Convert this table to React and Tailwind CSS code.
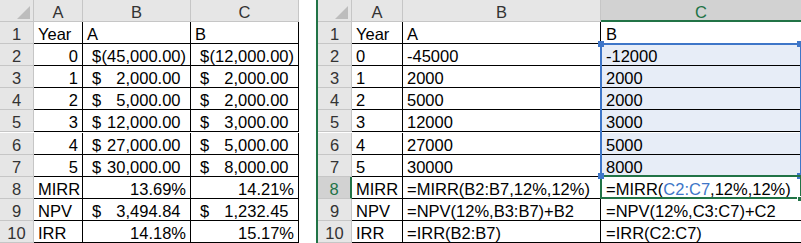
import React from "react";

const hdr =
  "h-[22px] border-r border-b border-[#c6c6c6] bg-[#e6e6e6] text-[#333] text-center leading-[17px] pt-[4px] overflow-hidden whitespace-nowrap";
const cell =
  "h-[22px] border-r border-b border-black leading-[17px] pt-[4px] px-[4px] overflow-hidden whitespace-nowrap";

function Corner() {
  return (
    <div className="h-[22px] border-r border-b border-[#c6c6c6] bg-[#e6e6e6] flex items-end justify-end pr-[3px] pb-[2px]">
      <svg width="13" height="13" viewBox="0 0 13 13">
        <polygon points="13,0 13,13 0,13" fill="#bdbdbd" />
      </svg>
    </div>
  );
}

function Acc({ v, neg }) {
  return (
    <div className={cell + " bg-white flex justify-between pl-[9px] pr-[4px]"}>
      <span>$</span>
      <span>
        {v}
        {neg ? "" : <span className="invisible">)</span>}
      </span>
    </div>
  );
}

const leftRows = [
  { a: "Year", b: "A", c: "B", kind: "text" },
  { a: "0", b: ["(45,000.00)", true], c: ["(12,000.00)", true], kind: "acc" },
  { a: "1", b: ["2,000.00"], c: ["2,000.00"], kind: "acc" },
  { a: "2", b: ["5,000.00"], c: ["2,000.00"], kind: "acc" },
  { a: "3", b: ["12,000.00"], c: ["3,000.00"], kind: "acc" },
  { a: "4", b: ["27,000.00"], c: ["5,000.00"], kind: "acc" },
  { a: "5", b: ["30,000.00"], c: ["8,000.00"], kind: "acc" },
  { a: "MIRR", b: "13.69%", c: "14.21%", kind: "pct" },
  { a: "NPV", b: ["3,494.84"], c: ["1,232.45"], kind: "acc" },
  { a: "IRR", b: "14.18%", c: "15.17%", kind: "pct" },
];

function LeftSheet() {
  return (
    <div className="grid grid-cols-[34px_49px_108px_108px] w-[299px] shrink-0">
      <Corner />
      <div className={hdr}>A</div>
      <div className={hdr}>B</div>
      <div className={hdr}>C</div>
      {leftRows.map((r, i) => {
        const isNumA = /^\d+$/.test(r.a);
        return (
          <React.Fragment key={i}>
            <div className={hdr}>{i + 1}</div>
            <div className={cell + " bg-white " + (isNumA ? "text-right" : "text-left")}>{r.a}</div>
            {r.kind === "text" && (
              <>
                <div className={cell + " bg-white"}>{r.b}</div>
                <div className={cell + " bg-white"}>{r.c}</div>
              </>
            )}
            {r.kind === "acc" && (
              <>
                <Acc v={r.b[0]} neg={r.b[1]} />
                <Acc v={r.c[0]} neg={r.c[1]} />
              </>
            )}
            {r.kind === "pct" && (
              <>
                <div className={cell + " bg-white text-right"}>{r.b}</div>
                <div className={cell + " bg-white text-right"}>{r.c}</div>
              </>
            )}
          </React.Fragment>
        );
      })}
    </div>
  );
}

const rightRows = [
  ["Year", "A", "B"],
  ["0", "-45000", "-12000"],
  ["1", "2000", "2000"],
  ["2", "5000", "2000"],
  ["3", "12000", "3000"],
  ["4", "27000", "5000"],
  ["5", "30000", "8000"],
  ["MIRR", "=MIRR(B2:B7,12%,12%)", null],
  ["NPV", "=NPV(12%,B3:B7)+B2", "=NPV(12%,C3:C7)+C2"],
  ["IRR", "=IRR(B2:B7)", "=IRR(C2:C7)"],
];

function RightSheet() {
  return (
    <div className="relative grid grid-cols-[34px_51px_198px_200px] w-[483px] shrink-0">
      <Corner />
      <div className={hdr}>A</div>
      <div className={hdr}>B</div>
      <div className="h-[22px] border-b-2 border-[#217346] bg-[#d2d2d2] text-[#217346] text-center leading-[17px] pt-[4px]">
        C
      </div>
      {rightRows.map((r, i) => {
        const n = i + 1;
        const sel = n >= 2 && n <= 7;
        return (
          <React.Fragment key={i}>
            {n === 8 ? (
              <div className="h-[22px] border-r-2 border-b border-r-[#217346] border-b-[#c6c6c6] bg-[#d2d2d2] text-[#217346] text-center leading-[17px] pt-[4px]">
                {n}
              </div>
            ) : (
              <div className={hdr}>{n}</div>
            )}
            <div className={cell + " bg-white"}>{r[0]}</div>
            <div className={cell + " bg-white"}>{r[1]}</div>
            <div className={cell + " border-r-0 pl-[5px] " + (sel ? "bg-[#e7edf7]" : "bg-white")}>
              {r[2] === null ? (
                <>
                  =MIRR(<span className="text-[#3e76c8]">C2:C7</span>,12%,12%)
                </>
              ) : (
                r[2]
              )}
            </div>
          </React.Fragment>
        );
      })}
      {/* range highlight C2:C7 */}
      <div className="absolute left-[282px] top-[43px] w-[202px] h-[134px] border-2 border-[#3e76c8] pointer-events-none" />
      <div className="absolute left-[280px] top-[41px] w-[6px] h-[6px] bg-[#3e76c8]" />
      <div className="absolute left-[479px] top-[41px] w-[6px] h-[6px] bg-[#3e76c8]" />
      <div className="absolute left-[479px] top-[173px] w-[6px] h-[6px] bg-[#3e76c8]" />
      {/* active cell C8 */}
      <div className="absolute left-[282px] top-[175px] w-[202px] h-[24px] border-2 border-[#217346] pointer-events-none" />
      <div className="absolute left-[280px] top-[173px] w-[6px] h-[6px] bg-[#3e76c8]" />
      <div className="absolute left-[479px] top-[196px] w-[6px] h-[6px] bg-[#217346] border border-white" />
    </div>
  );
}

export default function App() {
  return (
    <div className="w-[801px] h-[243px] overflow-hidden bg-white flex font-['Liberation_Sans',Arial,sans-serif] text-[16.5px] text-black">
      <LeftSheet />
      <div className="w-[17px] shrink-0" />
      <div className="w-[2px] h-[243px] bg-[#217346] shrink-0" />
      <RightSheet />
    </div>
  );
}
